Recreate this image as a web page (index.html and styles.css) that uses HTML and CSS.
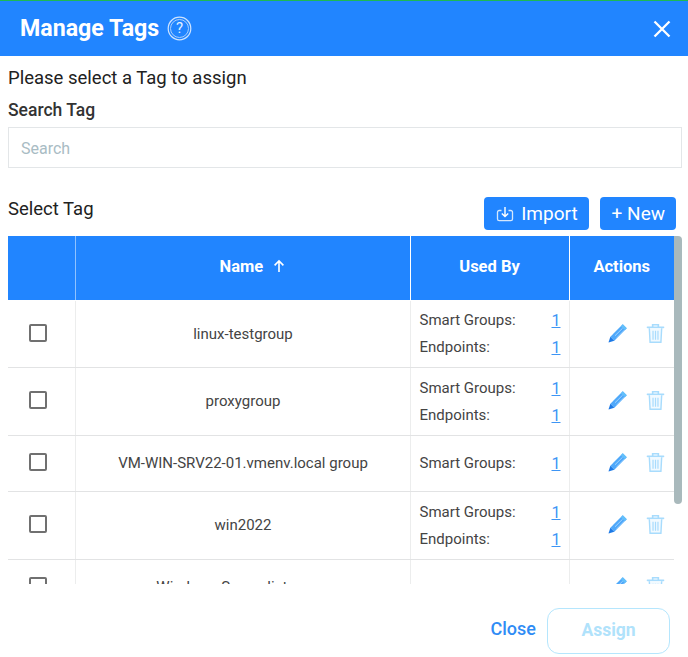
FILE: index.html
```html
<!DOCTYPE html>
<html lang="en">
<head>
<meta charset="utf-8">
<title>Manage Tags</title>
<link rel="stylesheet" href="styles.css">
</head>
<body>
<svg class="defs" width="0" height="0" aria-hidden="true">
  <symbol id="pencil" viewBox="0 0 20 20">
    <path d="M15 1.2 18.8 5 7 16.8 3.2 13Z" fill="#4fa8fa"/>
    <path d="M15 1.2 18.8 5 17 6.8 13.2 3Z" fill="#63c0fb"/>
    <path d="M5.8 10.4 13 3.2M7.6 12.2 14.8 5M9.4 14 16.6 6.8" stroke="#a6d6fd" stroke-width=".9" fill="none"/>
    <path d="M3.2 13 7 16.8 1.4 18.6Z" fill="#1c79e6"/>
  </symbol>
  <symbol id="trash" viewBox="0 0 20 22">
    <path d="M1.5 4.5H18.5M7 4V1.8H13V4" stroke="#a8dcfd" stroke-width="1.7" fill="none" stroke-linecap="round"/>
    <path d="M3.5 5.5 4.3 20.3H15.7L16.5 5.5" stroke="#a8dcfd" stroke-width="1.5" fill="#f2faff"/>
    <path d="M7.4 8V17.5M10 8V17.5M12.6 8V17.5" stroke="#a8dcfd" stroke-width="1.3" fill="none"/>
  </symbol>
</svg>
<div class="modal">
  <header class="modal-head">
    <div class="title-wrap">
      <h1 class="title">Manage Tags</h1>
      <svg class="help" width="25" height="25" viewBox="0 0 25 25" aria-hidden="true">
        <circle cx="12.5" cy="12.5" r="11.3" fill="none" stroke="#cfe4ff" stroke-width="1.2"/>
        <circle cx="12.5" cy="12.5" r="9" fill="none" stroke="#a9cffc" stroke-width="1"/>
        <text x="12.5" y="17.4" text-anchor="middle" class="help-mark">?</text>
      </svg>
    </div>
    <svg class="close-x" width="18" height="18" viewBox="0 0 18 18" aria-hidden="true">
      <path d="M1.5 1.5 16.5 16.5M16.5 1.5 1.5 16.5" stroke="#fff" stroke-width="2.3" fill="none"/>
    </svg>
  </header>
  <section class="form">
    <p class="hint">Please select a Tag to assign</p>
    <label class="search-label" for="s">Search Tag</label>
    <input class="search" id="s" type="text" placeholder="Search">
    <div class="toolbar">
      <span class="select-label">Select Tag</span>
      <div class="tools">
        <button class="btn" type="button">
          <svg width="18" height="18" viewBox="0 0 18 18" aria-hidden="true">
            <path d="M5.5 5.5H3.2A1.7 1.7 0 0 0 1.5 7.2V14A1.7 1.7 0 0 0 3.2 15.7H14.8A1.7 1.7 0 0 0 16.5 14V7.2A1.7 1.7 0 0 0 14.8 5.5H12.5" fill="none" stroke="#d5e7fc" stroke-width="1.3"/>
            <path d="M9 2V11.5M5.8 8.4 9 11.6 12.2 8.4" fill="none" stroke="#fff" stroke-width="1.4"/>
          </svg>
          Import
        </button>
        <button class="btn" type="button">+ New</button>
      </div>
    </div>
    <div class="table-wrap">
      <table class="tags">
        <thead>
          <tr>
            <th class="c-check"></th>
            <th class="c-name"><span class="name-head">Name <span class="arrow"><svg width="12" height="14" viewBox="0 0 12 14" aria-hidden="true"><path d="M6 13V2M1.6 6.4 6 2 10.4 6.4" fill="none" stroke="#fff" stroke-width="1.6"/></svg></span></span></th>
            <th class="c-used">Used By</th>
            <th class="c-act">Actions</th>
          </tr>
        </thead>
        <tbody>
          <tr class="r-first">
            <td class="check"><span class="box"></span></td>
            <td class="name">linux-testgroup</td>
            <td class="used"><div class="u"><span>Smart Groups:</span><a>1</a></div><div class="u"><span>Endpoints:</span><a>1</a></div></td>
            <td class="acts"><div class="icons"><svg class="i-p"><use href="#pencil"/></svg><svg class="i-t"><use href="#trash"/></svg></div></td>
          </tr>
          <tr class="r-two">
            <td class="check"><span class="box"></span></td>
            <td class="name">proxygroup</td>
            <td class="used"><div class="u"><span>Smart Groups:</span><a>1</a></div><div class="u"><span>Endpoints:</span><a>1</a></div></td>
            <td class="acts"><div class="icons"><svg class="i-p"><use href="#pencil"/></svg><svg class="i-t"><use href="#trash"/></svg></div></td>
          </tr>
          <tr class="r-one">
            <td class="check"><span class="box"></span></td>
            <td class="name">VM-WIN-SRV22-01.vmenv.local group</td>
            <td class="used"><div class="u"><span>Smart Groups:</span><a>1</a></div></td>
            <td class="acts"><div class="icons"><svg class="i-p"><use href="#pencil"/></svg><svg class="i-t"><use href="#trash"/></svg></div></td>
          </tr>
          <tr class="r-two">
            <td class="check"><span class="box"></span></td>
            <td class="name">win2022</td>
            <td class="used"><div class="u"><span>Smart Groups:</span><a>1</a></div><div class="u"><span>Endpoints:</span><a>1</a></div></td>
            <td class="acts"><div class="icons"><svg class="i-p"><use href="#pencil"/></svg><svg class="i-t"><use href="#trash"/></svg></div></td>
          </tr>
          <tr class="r-last">
            <td class="check"><span class="box"></span></td>
            <td class="name">Windows Server list group</td>
            <td class="used"></td>
            <td class="acts"><div class="icons"><svg class="i-p"><use href="#pencil"/></svg><svg class="i-t"><use href="#trash"/></svg></div></td>
          </tr>
        </tbody>
      </table>
      <div class="thumb"></div>
    </div>
  </section>
  <footer class="foot">
    <button class="close" type="button">Close</button>
    <button class="assign" type="button">Assign</button>
  </footer>
</div>
</body>
</html>
```

FILE: styles.css
```css
* { box-sizing: border-box; }
html, body { margin: 0; padding: 0; }
body {
  width: 688px;
  height: 657px;
  overflow: hidden;
  background: #fff;
  font-family: Roboto, "Liberation Sans", sans-serif;
  color: #212121;
}
.defs { position: absolute; }
.modal { display: flex; flex-direction: column; height: 657px; }
.modal-head {
  height: 56px;
  flex: none;
  display: flex;
  align-items: center;
  justify-content: space-between;
  padding: 0 17px 0 20px;
  background: #2185ff;
  border-top: 1px solid #1db954;
}
.title-wrap { display: flex; align-items: center; gap: 8px; }
.title { margin: 0 0 2px; font-size: 23.2px; font-weight: 700; color: #fff; line-height: 28px; }
.help { display: block; }
.help-mark { font-family: Roboto, sans-serif; font-size: 15px; fill: #e4f0ff; }
.close-x { display: block; }
.form { padding: 0 6px 0 8px; flex: none; height: 528px; overflow: hidden; }
.hint { margin: 0; padding-top: 12px; font-size: 18.5px; line-height: 21px; color: #212121; }
.search-label { display: block; margin-top: 11px; font-size: 17.5px; font-weight: 500; line-height: 21px; color: #333; }
.search {
  display: block;
  width: 674px;
  height: 41px;
  margin-top: 6px;
  padding: 2px 12px 0;
  border: 1px solid #e3e6e8;
  background: #fff;
  font-family: inherit;
  font-size: 16px;
  outline: none;
}
.search::placeholder { color: #a9bcc4; opacity: 1; }
.toolbar { display: flex; justify-content: space-between; height: 68px; align-items: flex-start; }
.select-label { margin-top: 31px; font-size: 18.5px; line-height: 21px; color: #212121; }
.tools { display: flex; gap: 11px; margin: 29px 6px 0 0; }
.btn {
  height: 33px;
  display: flex;
  align-items: center;
  gap: 7px;
  padding: 0 11px 0 12px;
  border: 0;
  border-radius: 4px;
  background: #2185ff;
  color: #fff;
  font-family: inherit;
  font-size: 19px;
  line-height: 1;
}
.table-wrap { position: relative; width: 674px; height: 348px; overflow: hidden; }
.tags { width: 666px; border-collapse: collapse; table-layout: fixed; font-size: 15px; }
.tags th {
  height: 64px;
  padding: 0 0 2px;
  background: #2185ff;
  color: #fff;
  font-size: 16.5px;
  font-weight: 700;
  border-left: 1px solid #fff;
  border-bottom: 1px solid #fff;
}
.tags th:first-child { border-left: 0; }
.tags th.c-name { border-left-color: #8fc2ff; }
.c-check { width: 67px; }
.c-name { width: 335px; }
.c-used { width: 159px; }
.c-act { width: 105px; }
.name-head { position: relative; left: 10px; }
.arrow { margin-left: 6px; vertical-align: -1px; }
.arrow svg { vertical-align: baseline; }
.tags td {
  padding: 0;
  border-left: 1px solid #eceded;
  border-bottom: 1px solid #e2e3e4;
  text-align: center;
  color: #444;
}
.tags td:first-child { border-left: 0; }
.tags td.name { padding-left: 1px; }
.tags td.check { padding: 0 6px 2px 0; }
.tags td.acts { padding-bottom: 1px; }
.r-first { height: 67px; }
.r-two { height: 68px; }
.r-one { height: 56px; }
.r-last { height: 56px; }
.box {
  display: block;
  width: 18px;
  height: 18px;
  margin: 0 auto;
  border: 2px solid #707070;
  border-radius: 2px;
  background: #fff;
}
.tags td.used { padding: 1px 8px 0 9px; }
.u { display: flex; justify-content: space-between; line-height: 27px; font-size: 15px; color: #444; }
.u a { color: #3d95f5; text-decoration: underline; font-size: 16px; }
.icons { display: flex; align-items: center; justify-content: flex-end; gap: 18px; padding-right: 9px; }
.i-p { width: 21px; height: 21px; display: block; }
.i-t { width: 19px; height: 21px; display: block; }
.thumb {
  position: absolute;
  top: 0;
  right: 0;
  width: 8px;
  height: 268px;
  background: #a9b9bc;
  border-radius: 0 4px 4px 4px;
}
.foot {
  flex: 1;
  display: flex;
  justify-content: flex-end;
  align-items: flex-start;
  padding: 24px 18px 0 0;
  gap: 11px;
}
.close {
  margin-top: 10px;
  padding: 0;
  border: 0;
  background: none;
  color: #2f8cf5;
  font-family: inherit;
  font-size: 18px;
  font-weight: 500;
}
.assign {
  width: 123px;
  height: 46px;
  padding: 0 0 3px;
  border: 1px solid #b5e6fd;
  border-radius: 12px;
  background: #fff;
  color: #b0e2fb;
  font-family: inherit;
  font-size: 17.5px;
  font-weight: 700;
}
```
